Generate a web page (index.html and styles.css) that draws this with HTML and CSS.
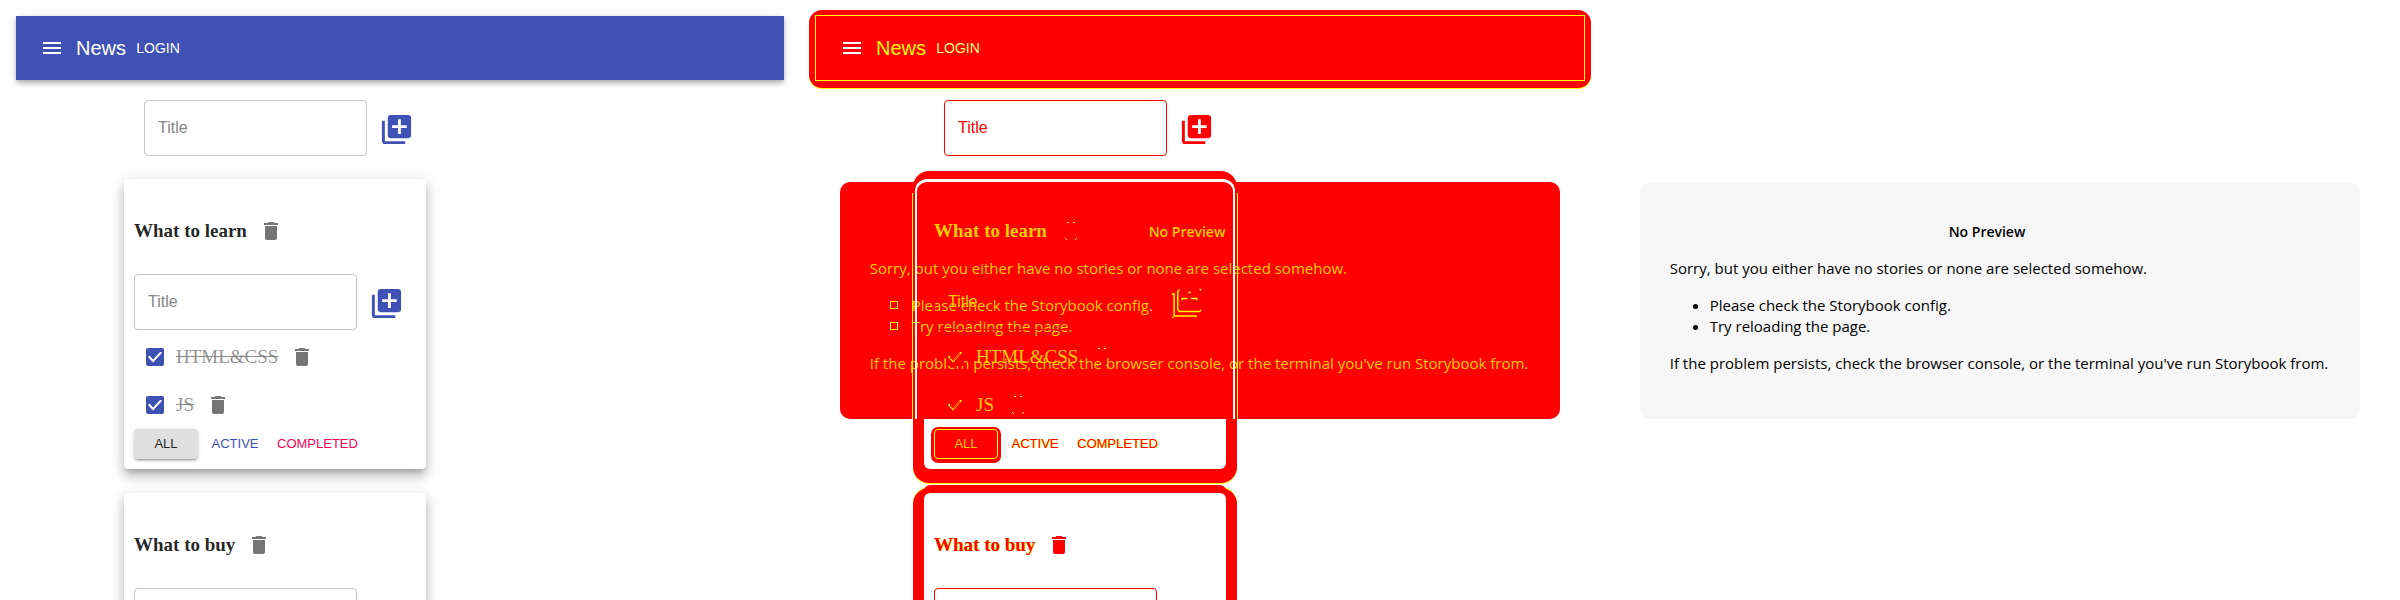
FILE: index.html
```
<!DOCTYPE html>
<html lang="en">
<head>
<meta charset="utf-8">
<title>News</title>
<link rel="stylesheet" href="styles.css">
</head>
<body>
<svg class="sprite" aria-hidden="true">
  <symbol id="menu" viewBox="0 0 24 24"><path d="M3 18h18v-2H3v2zm0-5h18v-2H3v2zm0-7v2h18V6H3z"/></symbol>
  <symbol id="add" viewBox="0 0 24 24"><path d="M4 6H2v14c0 1.100.9 2 2 2h14v-2H4V6zm16-4H8c-1.100 0-2 .9-2 2v12c0 1.100.9 2 2 2h12c1.100 0 2-.9 2-2V4c0-1.100-.9-2-2-2zm-1 9h-4v4h-2v-4H9V9h4V5h2v4h4v2z"/></symbol>
  <symbol id="add-marks" viewBox="0 0 24 24"><path d="M2 5.500h1.500v15h15v1M6 16V4l1-1.500M6 16l1 1.500h14l1-1M21 2l1 1M9 9.800V8.500h3.500M15 8.500h4v1.300M13.200 4.500h1.800M2 21.500h1"/></symbol>
  <symbol id="trash" viewBox="0 0 24 24"><path d="M6 19c0 1.100.9 2 2 2h8c1.100 0 2-.9 2-2V7H6v12zM19 4h-3.500l-1-1h-5l-1 1H5v2h14V4z"/></symbol>
  <symbol id="trash-marks" viewBox="0 0 24 24"><path d="M8 3h2v1H8zM14 3h2v1h-2zM6 19h1v1H6zM7 20h1v1H7zM17 19h1v1h-1zM16 20h1v1h-1z"/></symbol>
</svg>
<main class="board">
  <section class="pane app">
    <header class="bar">
      <button class="icon-btn menu-btn" aria-label="Menu"><svg class="icon"><use href="#menu"/></svg></button>
      <span class="brand">News</span>
      <button class="login">Login</button>
    </header>
    <div class="content">
      <form class="add-form">
        <input class="field" type="text" placeholder="Title" aria-label="List title">
        <button class="icon-btn add-btn" type="button" aria-label="Add list"><svg class="icon big"><use href="#add"/></svg></button>
      </form>
      <article class="card">
        <div class="card-body">
          <h3 class="card-title">What to learn <button class="icon-btn" aria-label="Delete list"><svg class="icon"><use href="#trash"/></svg></button></h3>
          <form class="add-form inner">
            <input class="field" type="text" placeholder="Title" aria-label="Task title">
            <button class="icon-btn add-btn" type="button" aria-label="Add task"><svg class="icon big"><use href="#add"/></svg></button>
          </form>
          <div class="task"><label class="task-label"><input class="check" type="checkbox" checked><span class="done">HTML&amp;CSS</span></label><button class="icon-btn" aria-label="Delete task"><svg class="icon"><use href="#trash"/></svg></button></div>
          <div class="task"><label class="task-label"><input class="check" type="checkbox" checked><span class="done">JS</span></label><button class="icon-btn" aria-label="Delete task"><svg class="icon"><use href="#trash"/></svg></button></div>
          <div class="filters">
            <button class="filter selected">All</button>
            <button class="filter active">Active</button>
            <button class="filter completed">Completed</button>
          </div>
        </div>
      </article>
      <article class="card">
        <div class="card-body">
          <h3 class="card-title">What to buy <button class="icon-btn" aria-label="Delete list"><svg class="icon"><use href="#trash"/></svg></button></h3>
          <form class="add-form inner">
            <input class="field" type="text" placeholder="Title" aria-label="Task title">
            <button class="icon-btn add-btn" type="button" aria-label="Add task"><svg class="icon big"><use href="#add"/></svg></button>
          </form>
        </div>
      </article>
    </div>
  </section>

  <section class="pane app diff">
    <header class="bar">
      <button class="icon-btn menu-btn" aria-label="Menu"><svg class="icon"><use href="#menu"/></svg></button>
      <span class="brand">News</span>
      <button class="login">Login</button>
    </header>
    <div class="content">
      <form class="add-form">
        <input class="field" type="text" placeholder="Title" aria-label="List title">
        <button class="icon-btn add-btn" type="button" aria-label="Add list"><svg class="icon big"><use href="#add"/></svg></button>
      </form>
      <article class="card crossed">
        <div class="card-body">
          <h3 class="card-title">What to learn <button class="icon-btn" aria-label="Delete list"><svg class="icon"><use href="#trash-marks"/></svg></button></h3>
          <form class="add-form inner">
            <input class="field" type="text" placeholder="Title" aria-label="Task title">
            <button class="icon-btn add-btn" type="button" aria-label="Add task"><svg class="icon big"><use href="#add-marks"/></svg></button>
          </form>
          <div class="task"><label class="task-label"><input class="check" type="checkbox" checked><span class="done">HTML&amp;CSS</span></label><button class="icon-btn" aria-label="Delete task"><svg class="icon"><use href="#trash-marks"/></svg></button></div>
          <div class="task"><label class="task-label"><input class="check" type="checkbox" checked><span class="done">JS</span></label><button class="icon-btn" aria-label="Delete task"><svg class="icon"><use href="#trash-marks"/></svg></button></div>
          <div class="filters">
            <button class="filter selected">All</button>
            <button class="filter active">Active</button>
            <button class="filter completed">Completed</button>
          </div>
        </div>
      </article>
      <article class="card next">
        <div class="card-body">
          <h3 class="card-title">What to buy <button class="icon-btn" aria-label="Delete list"><svg class="icon"><use href="#trash"/></svg></button></h3>
          <form class="add-form inner">
            <input class="field" type="text" placeholder="Title" aria-label="Task title">
            <button class="icon-btn add-btn" type="button" aria-label="Add task"><svg class="icon big"><use href="#add"/></svg></button>
          </form>
        </div>
      </article>
    </div>
    <div class="overlay">
      <div class="notice">
        <h1 class="notice-title">No Preview</h1>
        <p>Sorry, but you either have no stories or none are selected somehow.</p>
        <ul>
          <li>Please check the Storybook config.</li>
          <li>Try reloading the page.</li>
        </ul>
        <p>If the problem persists, check the browser console, or the terminal you've run Storybook from.</p>
      </div>
    </div>
  </section>

  <section class="pane preview">
    <div class="notice">
      <h1 class="notice-title">No Preview</h1>
      <p>Sorry, but you either have no stories or none are selected somehow.</p>
      <ul>
        <li>Please check the Storybook config.</li>
        <li>Try reloading the page.</li>
      </ul>
      <p>If the problem persists, check the browser console, or the terminal you've run Storybook from.</p>
    </div>
  </section>
</main>
</body>
</html>
```
FILE: styles.css
```
* { box-sizing: border-box; }
body { margin: 0; background: #fff; font-family: "Liberation Sans", Arial, sans-serif; }
button { border: 0; background: none; padding: 0; font: inherit; color: inherit; cursor: pointer; }
.sprite { display: none; }

.board { display: grid; grid-template-columns: repeat(3, 1fr); height: 100vh; overflow: hidden; }
.pane { min-width: 0; }
.app { padding: 16px; overflow: hidden; }

.bar {
  display: flex; align-items: center; height: 64px; padding: 0 24px;
  background: #3f51b5; color: #fff;
  box-shadow: 0 2px 4px -1px rgba(0,0,0,.2), 0 4px 5px 0 rgba(0,0,0,.14), 0 1px 10px 0 rgba(0,0,0,.12);
}
.icon-btn { display: flex; flex: none; padding: 12px; color: #757575; }
.menu-btn { margin-left: -12px; color: inherit; }
.icon { display: block; width: 24px; height: 24px; fill: currentColor; }
.big { width: 35px; height: 35px; }
.add-btn { color: #3f51b5; }
.brand { font-size: 20px; line-height: 32px; }
.login { min-width: 64px; padding: 6px 8px; font-size: 14px; line-height: 24px; text-transform: uppercase; }

.content { display: flex; flex-direction: column; align-items: flex-start; padding: 0 108px; }
.add-form { display: flex; align-items: flex-start; margin: 0; padding: 20px; }
.inner { padding: 0; }
.field {
  width: 223px; height: 56px; padding: 0 13px;
  border: 1px solid #c4c4c4; border-radius: 4px; background: transparent;
  font: 16px "Liberation Sans", Arial, sans-serif; color: rgba(0,0,0,.87);
}
.field::placeholder { color: #858585; opacity: 1; }

.card {
  width: 302px; margin-bottom: 24px; padding: 10px; border-radius: 4px; background: #fff;
  font-family: "Liberation Serif", "Times New Roman", serif; font-size: 19px; color: rgba(0,0,0,.87);
  box-shadow: 0 5px 5px -3px rgba(0,0,0,.2), 0 8px 10px 1px rgba(0,0,0,.14), 0 3px 14px 2px rgba(0,0,0,.12);
}
.card-title { display: flex; align-items: center; margin: 18px 0 19px; font-size: 19px; line-height: 22px; }
.task, .task-label { display: flex; align-items: center; }
.check {
  appearance: none; width: 18px; height: 18px; margin: 12px; border-radius: 2px;
  background: #3f51b5; display: grid; place-items: center;
}
.check::before {
  content: ""; grid-area: 1 / 1; width: 14px; height: 11px; background: #fff;
  clip-path: polygon(0 50%, 10% 37%, 36% 72%, 90% 0, 100% 12%, 36% 100%);
}
.done { text-decoration: line-through; opacity: .5; }
.filters { display: flex; gap: 5px; font-family: "Liberation Sans", Arial, sans-serif; }
.filter { min-width: 64px; padding: 4px 5px; border-radius: 4px; font-size: 13px; line-height: 22px; text-transform: uppercase; }
.selected {
  background: #e0e0e0;
  box-shadow: 0 3px 1px -2px rgba(0,0,0,.2), 0 2px 2px 0 rgba(0,0,0,.14), 0 1px 5px 0 rgba(0,0,0,.12);
}
.active { color: #3f51b5; }
.completed { color: #f50057; }

.preview, .overlay { display: flex; align-items: center; justify-content: center; }
.notice {
  padding: 40px 32px 45px 30px; border-radius: 10px; background: #f7f7f7; color: #000;
  font: 15px/21px "Open Sans", "Noto Sans", sans-serif;
}
.notice-title { margin: 0 0 16px; padding-right: 24px; font-size: 14px; line-height: 20px; font-weight: 600; text-align: center; }
.notice p { margin: 0; }
.notice ul { margin: 16px 0; padding-left: 40px; }

.diff { position: relative; }
.diff .bar { position: relative; background: #f00; box-shadow: 0 1px 0 7px #f00, 0 2px 0 7px #ff0; border-radius: 6px; }
.diff .bar::before { content: ""; position: absolute; inset: -1px; border: 1px solid #ff0; pointer-events: none; }
.diff .brand { color: #ff0; }
.diff .login { color: #ff8; }
.diff .field { border-color: #f00; }
.diff .field::placeholder { color: #f00; }
.diff .add-btn, .diff .icon-btn { color: #f00; }
.diff .menu-btn { color: #fff; }
.diff .card { color: #f00; border-radius: 6px; box-shadow: 0 3px 0 11px #f00, 0 4px 0 11px #ff0; }
.diff .next { box-shadow: 0 -8px 0 0 #f00, 0 6px 0 11px #f00, 0 5px 0 11px #ff0; }
.diff .card-title, .diff .filter { text-shadow: 1px 0 0 #ff0; }
.diff .filter { color: #f00; }
.diff .selected { background: #f00; outline: 1px solid #ff0; outline-offset: -1px; box-shadow: 0 1px 0 3px #f00; color: #fc0; text-shadow: none; }

.overlay { position: absolute; inset: 0; z-index: 2; pointer-events: none; }
.overlay .notice { background: #f00; color: #fc0; }
.overlay ul { list-style: none; }
.overlay li::before {
  content: ""; display: inline-block; width: 6px; height: 6px;
  margin: 0 14px 2px -20px; border: 1px solid #ff0;
}
.crossed { position: relative; }
.crossed .card-body { position: relative; z-index: 3; }
.crossed::before {
  content: ""; position: absolute; z-index: 3; inset: 0 -9px 50px;
  border: solid #fff; border-width: 3px 2px 0; border-radius: 12px 12px 0 0;
}
.crossed::after {
  content: ""; position: absolute; z-index: 3; inset: 14px -12px 50px;
  border: solid #ff0; border-width: 0 1px;
}
.crossed .card-title { color: #fc0; text-shadow: none; }
.crossed .field::placeholder, .crossed .done { color: #fc0; }
.crossed .done { opacity: 1; text-decoration: none; }
.crossed .icon-btn { color: #ff0; }
.crossed .add-btn .icon { fill: none; stroke: #ff0; stroke-width: 1px; }
.diff .check { background: #f00; }
.diff .check::before { background: #ff0; }
.diff .check::after {
  content: ""; grid-area: 1 / 1; width: 11px; height: 8px; background: #f00;
  clip-path: polygon(0 55%, 6% 45%, 36% 82%, 94% 0, 100% 8%, 36% 100%);
}
```
